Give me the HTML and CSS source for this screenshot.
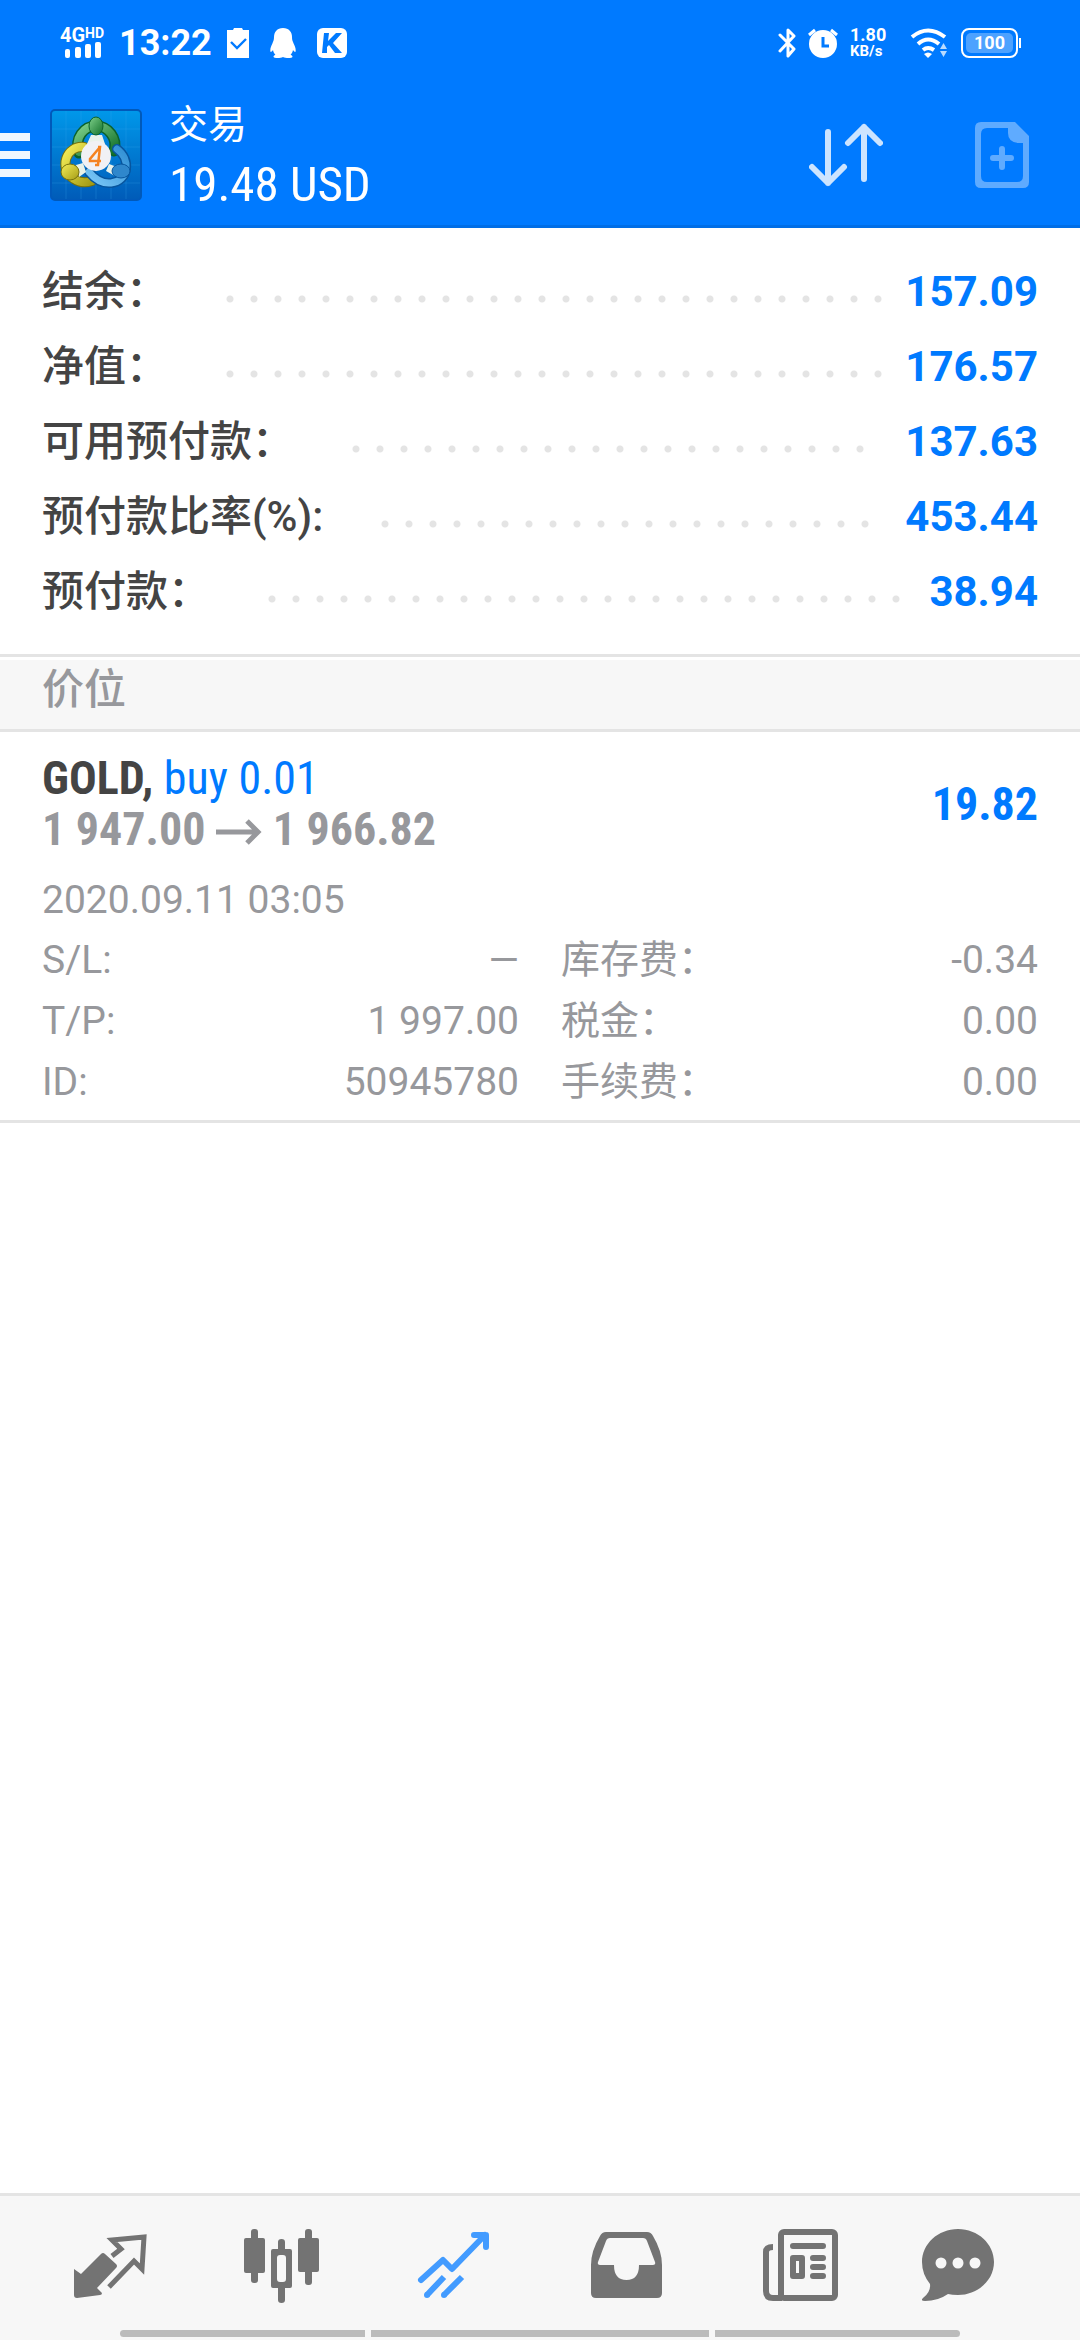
FILE: index.html
```html
<!DOCTYPE html>
<html lang="zh-CN">
<head>
<meta charset="utf-8">
<meta name="viewport" content="width=device-width, initial-scale=1">
<title>交易</title>
<link rel="stylesheet" href="styles.css">
</head>
<body>
<header class="top">
  <div class="status">
    <div class="status-group">
      <div class="signal">
        <span class="signal-label">4G<sup class="signal-hd">HD</sup></span>
        <svg class="signal-bars" width="36" height="16" viewBox="0 0 36 16" fill="#fff"><rect x="0" y="7" width="5" height="9" rx="2"/><rect x="10" y="5" width="6" height="11" rx="2"/><rect x="20" y="2" width="6" height="14" rx="2"/><rect x="30" y="0" width="6" height="16" rx="2"/></svg>
      </div>
      <span class="clock">13:22</span>
      <svg class="status-icon" width="22" height="30" viewBox="0 0 22 30"><path fill="#fff" d="M0 2h6l1-2h8l1 2h6v28H0z"/><path d="M4 14l6 6 9-9" fill="none" stroke="#007aff" stroke-width="2.4"/></svg>
      <svg class="status-icon" width="26" height="30" viewBox="0 0 26 30"><path fill="#fff" d="M13 0c6 0 9 4 9 9 0 3 .6 4 1.600 6.500C25 18 26 21 25.600 23.500c-.4 1-1.600 0-2.600-1.500-.4 2-1.200 3.500-2.400 4.800 1.600.7 2 1.400 1.800 2.200-.4 1.300-7 1.300-9.400 0-2.400 1.300-9 1.300-9.400 0-.2-.8.2-1.500 1.800-2.200C4.200 25.500 3.400 24 3 22c-1 1.500-2.200 2.500-2.600 1.500C0 21 1 18 2.400 15.500 3.400 13 4 12 4 9c0-5 3-9 9-9z"/></svg>
      <svg class="status-icon" width="30" height="30" viewBox="0 0 30 30"><rect width="30" height="30" rx="6" fill="#fff"/><path fill="#007aff" d="M7 5h5l-1 8 8-8h6l-9 10 9 10h-7l-6-8-2 2v6H5z"/></svg>
    </div>
    <div class="status-group status-right">
      <svg width="18" height="30" viewBox="0 0 18 30" fill="none" stroke="#fff" stroke-width="3" stroke-linejoin="round" stroke-linecap="round"><path d="M2 7l14 14-6 7V2l6 6L2 23"/></svg>
      <svg class="alarm" width="30" height="30" viewBox="0 0 30 30"><circle cx="15" cy="16" r="14" fill="#fff"/><path d="M1 7l6-5M29 7l-6-5" stroke="#fff" stroke-width="3"/><path d="M15 9v9h6" fill="none" stroke="#007aff" stroke-width="3"/></svg>
      <div class="speed"><span class="speed-value">1.80</span><span class="speed-unit">KB/s</span></div>
      <svg class="wifi" width="38" height="30" viewBox="0 0 38 30"><g fill="none" stroke="#fff" stroke-width="4"><path d="M2 9q16-13 33 0"/><path d="M8 16q10-9 21 0"/><path d="M13 22q5-4 11 0"/></g><path fill="#fff" d="M14 26q4-3 8 0l-4 4z"/><path fill="#b8dbff" d="M30 21l3.500-6 3.500 6zM30 23l3.500 6 3.500-6z"/></svg>
      <div class="battery"><span class="battery-level">100</span></div>
    </div>
  </div>
  <div class="bar">
    <button class="menu" aria-label="菜单"><span></span><span></span><span></span></button>
    <svg class="logo" width="92" height="92" viewBox="0 0 92 92">
      <defs>
        <linearGradient id="sky" x1="0" y1="0" x2="0" y2="1"><stop offset="0" stop-color="#0098ea"/><stop offset="1" stop-color="#005bb8"/></linearGradient>
        <linearGradient id="green" x1="0" y1="0" x2="1" y2="1"><stop offset="0" stop-color="#7ed08a"/><stop offset="1" stop-color="#12702a"/></linearGradient>
        <linearGradient id="yellow" x1="0" y1="0" x2="1" y2="1"><stop offset="0" stop-color="#f5ee58"/><stop offset="1" stop-color="#a59c16"/></linearGradient>
        <linearGradient id="blue" x1="1" y1="0" x2="0" y2="1"><stop offset="0" stop-color="#2f8fd4"/><stop offset="1" stop-color="#7cc8f8"/></linearGradient>
      </defs>
      <rect x="1" y="1" width="90" height="90" rx="4" fill="url(#sky)" stroke="#0059ba" stroke-width="2"/>
      <path d="M16 2v88M31 2v88M46 2v88M61 2v88M76 2v88M2 20h88M2 38h88M2 56h88M2 74h88" stroke="#38a8ef" stroke-opacity=".25" fill="none"/>
      <g fill="none" stroke-linecap="round">
        <path d="M29 44C24 29 34 17 46 17s22 12 18 25" stroke="#0c622b" stroke-width="11"/>
        <path d="M29 43C24 29 34 17 46 17s22 12 18 25" stroke="url(#green)" stroke-width="8"/>
        <path d="M34 38C16 36 8 60 24 70c6 4 12 4 18 2" stroke="#77710c" stroke-width="10"/>
        <path d="M34 38C16 36 8 60 24 70c6 4 12 4 18 2" stroke="url(#yellow)" stroke-width="8"/>
        <path d="M67 40c14 10 12 32-6 34-10 1-17-5-22-11" stroke="#07559e" stroke-width="10"/>
        <path d="M67 40c14 10 12 32-6 34-10 1-17-5-22-11" stroke="url(#blue)" stroke-width="7"/>
      </g>
      <path d="M41 26h11l3 9H37zM26 56l7-2 3 9-7 5zM59 55l8 3-2 9-9-5z" fill="#e9f2ea"/>
      <ellipse cx="46" cy="17" rx="7" ry="9" fill="url(#green)" stroke="#0c622b"/>
      <ellipse cx="20" cy="63" rx="9" ry="8" fill="url(#yellow)" stroke="#77710c"/>
      <ellipse cx="71" cy="62" rx="9" ry="7" fill="#2f87cc" stroke="#07559e"/>
      <circle cx="46" cy="47" r="15" fill="#f1f1f4"/>
      <path d="M50 38l-10 12v2h11M48 38h2l-2 18h-3" fill="none" stroke="#f58220" stroke-width="2.500"/>
    </svg>
    <div class="titles"><h1 class="title">交易</h1><p class="profit">19.48 USD</p></div>
    <button class="icon-btn" aria-label="排序"><svg width="74" height="64" viewBox="0 0 74 64" fill="none" stroke="#cce4ff" stroke-width="6" stroke-linecap="round" stroke-linejoin="round"><path d="M19 9v51M3 44l16 16 16-16M55 56V4M39 20L55 4l16 16"/></svg></button>
    <button class="icon-btn" aria-label="新订单"><svg width="54" height="66" viewBox="0 0 54 66"><path fill="#5fabff" fill-rule="evenodd" d="M6 0h34l14 14v46q0 6-6 6H6q-6 0-6-6V6q0-6 6-6zM12 6q-6 0-6 6v42q0 6 6 6h30q6 0 6-6V21h-5q-10-1-10-10V6z"/><path d="M27 27v18M18 36h18" stroke="#5fabff" stroke-width="6" stroke-linecap="round"/></svg></button>
  </div>
</header>

<main class="content">
  <dl class="summary">
    <div class="sum-row"><dt>结余：</dt><dd class="leader"><span></span></dd><dd class="sum-value">157.09</dd></div>
    <div class="sum-row"><dt>净值：</dt><dd class="leader"><span></span></dd><dd class="sum-value">176.57</dd></div>
    <div class="sum-row"><dt>可用预付款：</dt><dd class="leader"><span></span></dd><dd class="sum-value">137.63</dd></div>
    <div class="sum-row"><dt>预付款比率(%):</dt><dd class="leader"><span></span></dd><dd class="sum-value">453.44</dd></div>
    <div class="sum-row"><dt>预付款：</dt><dd class="leader"><span></span></dd><dd class="sum-value">38.94</dd></div>
  </dl>
  <h2 class="section">价位</h2>
  <article class="position">
    <div class="pos-head">
      <div>
        <p class="pos-line"><b class="symbol">GOLD,</b> <span class="side">buy 0.01</span></p>
        <p class="pos-line prices">1 947.00 <svg width="46" height="26" viewBox="0 0 46 26" fill="none" stroke="#97989c" stroke-width="5"><path d="M0 13h43M31 2l11 11-11 11"/></svg> 1 966.82</p>
      </div>
      <strong class="pos-profit">19.82</strong>
    </div>
    <p class="date">2020.09.11 03:05</p>
    <dl class="details">
      <div><dt>S/L:</dt><dd>—</dd></div>
      <div><dt>库存费：</dt><dd>-0.34</dd></div>
      <div><dt>T/P:</dt><dd>1 997.00</dd></div>
      <div><dt>税金：</dt><dd>0.00</dd></div>
      <div><dt>ID:</dt><dd>50945780</dd></div>
      <div><dt>手续费：</dt><dd>0.00</dd></div>
    </dl>
  </article>
</main>

<footer class="bottom">
  <nav class="tabs">
    <a href="#quotes" aria-label="行情"><svg width="96" height="96" viewBox="0 0 96 96"><path fill="#737373" d="M12 51l7 5 20-20q2-2 4 0l11 10q2 2 0 4L35 70l5 5q0 2-2 2l-23 3q-3 0-3-3z"/><path d="M47 69l25-26 8 8 2-32-32 3 9 9-9 7" fill="none" stroke="#737373" stroke-width="5"/></svg></a>
    <a href="#chart" aria-label="图表"><svg width="96" height="96" viewBox="0 0 96 96" fill="#737373"><rect x="10" y="20" width="21" height="35" rx="2"/><rect x="17" y="11" width="7" height="54" rx="3"/><path fill-rule="evenodd" d="M39 31h5v-7q0-3 3.500-3t3.500 3v7h5q2 0 2 2v35q0 2-2 2h-5v12q0 3-3.500 3T44 82V70h-5q-2 0-2-2V33q0-2 2-2zm7 6q-3 0-3 3v21q0 3 3 3h3q3 0 3-3V40q0-3-3-3z"/><rect x="64" y="20" width="21" height="34" rx="2"/><rect x="71" y="11" width="7" height="56" rx="3"/></svg></a>
    <a href="#trade" aria-label="交易" aria-current="page"><svg width="96" height="96" viewBox="0 0 96 96" fill="none" stroke="#429bff" stroke-width="6"><path d="M15 62l22-20 9 9 33-34M68 17h12v12" stroke-linecap="round" stroke-linejoin="round"/><path d="M21 77l17-18M38 77l18-18"/><g fill="#429bff" stroke="none"><circle cx="21" cy="77" r="3"/><circle cx="38" cy="77" r="3"/></g></svg></a>
    <a href="#history" aria-label="历史"><svg width="96" height="96" viewBox="0 0 96 96"><path fill="#737373" fill-rule="evenodd" d="M28 14h41q4 0 6 4 9 15 9 29v28q0 5-5 5H18q-5 0-5-5V47q0-14 9-29 2-4 6-4zm4 6q-3 0-4 3l-8 21q-1 3 2 3h14q0 15 12.500 15T61 47h14q3 0 2-3l-8-21q-1-3-4-3z"/></svg></a>
    <a href="#news" aria-label="新闻"><svg width="96" height="96" viewBox="0 0 96 96" fill="none" stroke="#737373" stroke-width="6"><rect x="31" y="14" width="54" height="66" rx="3"/><path d="M23 29q-7 0-7 5v39q0 7 7 7h9"/><path d="M43 28h30M63 40h10M63 49h10M63 58h10" stroke-linecap="round"/><rect x="43" y="40" width="9" height="18" stroke-linejoin="round"/></svg></a>
    <a href="#messages" aria-label="信箱"><svg width="96" height="96" viewBox="0 0 96 96"><path fill="#737373" d="M36 11c20 0 36 15 36 33S56 77 36 77q-6 0-10-1-10 7-23 7-5 0-2-3 8-6 7-14Q0 56 0 44c0-18 16-33 36-33z"/><g fill="#f7f7f7"><circle cx="19" cy="45" r="5.500"/><circle cx="36" cy="45" r="5.500"/><circle cx="53" cy="45" r="5.500"/></g></svg></a>
  </nav>
  <div class="gesture"><span></span><span class="mid"></span><span></span></div>
</footer>
</body>
</html>
```
FILE: styles.css
```css
* { box-sizing: border-box; margin: 0; padding: 0; }
body {
  min-height: 100vh;
  display: flex;
  flex-direction: column;
  background: #fff;
  color: #444;
  font-family: Roboto, "Noto Sans CJK SC", sans-serif;
}
svg { display: block; flex: none; }
button { border: 0; background: none; font: inherit; color: inherit; }

.top { background: #007aff; color: #fff; border-bottom: 3px solid #006ee6; }
.status { height: 85px; padding: 0 62px 0 60px; display: flex; justify-content: space-between; align-items: center; }
.status-group { display: flex; align-items: center; }
.signal { width: 46px; height: 30px; }
.signal-label { display: flex; height: 14px; line-height: 14px; font-size: 20px; font-weight: 700; }
.signal-hd { font-size: 14px; line-height: 10px; }
.signal-bars { margin-left: 5px; }
.clock { margin-left: 13px; width: 94px; font-size: 36px; line-height: 42px; font-weight: 700; }
.status-icon { margin-left: 21px; }
.clock + .status-icon { margin-left: 14px; }
.alarm { margin-left: 12px; }
.speed { margin-left: 12px; width: 36px; display: flex; flex-direction: column; font-weight: 700; }
.speed-value { font-size: 18px; line-height: 16px; }
.speed-unit { font-size: 15px; line-height: 16px; }
.wifi { margin-left: 24px; }
.battery {
  position: relative;
  margin-left: 13px;
  width: 57px;
  height: 30px;
  padding: 3px;
  border: 2px solid #fff;
  border-radius: 8px;
}
.battery::after { content: ""; position: absolute; right: -5px; top: 8px; width: 2px; height: 10px; background: #fff; }
.battery-level {
  display: block;
  border-radius: 5px;
  background: #4da2ff;
  font-size: 18px;
  line-height: 20px;
  font-weight: 700;
  text-align: center;
}

.bar { height: 140px; padding-right: 51px; display: flex; align-items: center; }
.menu { width: 30px; display: flex; flex-direction: column; gap: 10px; margin-right: 20px; }
.menu span { height: 8px; background: #f0f7ff; }
.titles { flex: 1; margin-left: 27px; }
.title { font-size: 39px; line-height: 60px; font-weight: 400; }
.profit { font-family: "Roboto Condensed", Roboto, sans-serif; font-size: 49px; line-height: 60px; }
.icon-btn + .icon-btn { margin-left: 92px; }

.content { flex: 1; }
.summary { padding: 27px 42px 24px; border-bottom: 3px solid #e4e4e4; }
.sum-row { display: flex; height: 75px; font-size: 42px; line-height: 73px; font-weight: 500; }
.leader { flex: 1; margin: 40px 14px 0 50px; }
.leader span {
  display: block;
  width: round(down, 100%, 24px);
  height: 8px;
  background: radial-gradient(circle, #e4e4e4 3px, transparent 4px) 0 0 / 24px 8px repeat-x;
}
.sum-value { color: #007aff; font-weight: 700; }
.section {
  margin-top: 3px;
  padding: 0 42px;
  height: 72px;
  background: #f7f7f7;
  border-bottom: 3px solid #e4e4e4;
  color: #97989c;
  font-size: 42px;
  line-height: 60px;
  font-weight: 500;
}
.position { padding: 21px 42px 7px; border-bottom: 3px solid #e4e4e4; color: #97989c; }
.pos-head { display: flex; justify-content: space-between; align-items: center; }
.pos-line { font-family: "Roboto Condensed", Roboto, sans-serif; font-size: 46px; line-height: 51px; white-space: nowrap; }
.symbol { color: #444; }
.side { color: #007aff; }
.prices { font-weight: 700; }
.prices svg { display: inline-block; }
.pos-profit { font-family: "Roboto Condensed", Roboto, sans-serif; font-size: 46px; line-height: 51px; color: #007aff; }
.date { margin-top: 15px; font-size: 39px; line-height: 60px; }
.details { display: grid; grid-template-columns: 1fr 1fr; column-gap: 42px; font-size: 39px; line-height: 61px; }
.details div { display: flex; justify-content: space-between; }

.bottom { background: #f7f7f7; border-top: 3px solid #e4e4e4; }
.tabs { padding: 22px 24px 16px; display: flex; }
.tabs a { flex: 1; display: flex; justify-content: center; }
.gesture { display: flex; gap: 6px; height: 10px; padding: 0 120px 3px; }
.gesture span { flex: 245; background: #bbb; }
.gesture .mid { flex: 338; }
.gesture span:first-child { border-radius: 4px 0 0 4px; }
.gesture span:last-child { border-radius: 0 4px 4px 0; }
```
